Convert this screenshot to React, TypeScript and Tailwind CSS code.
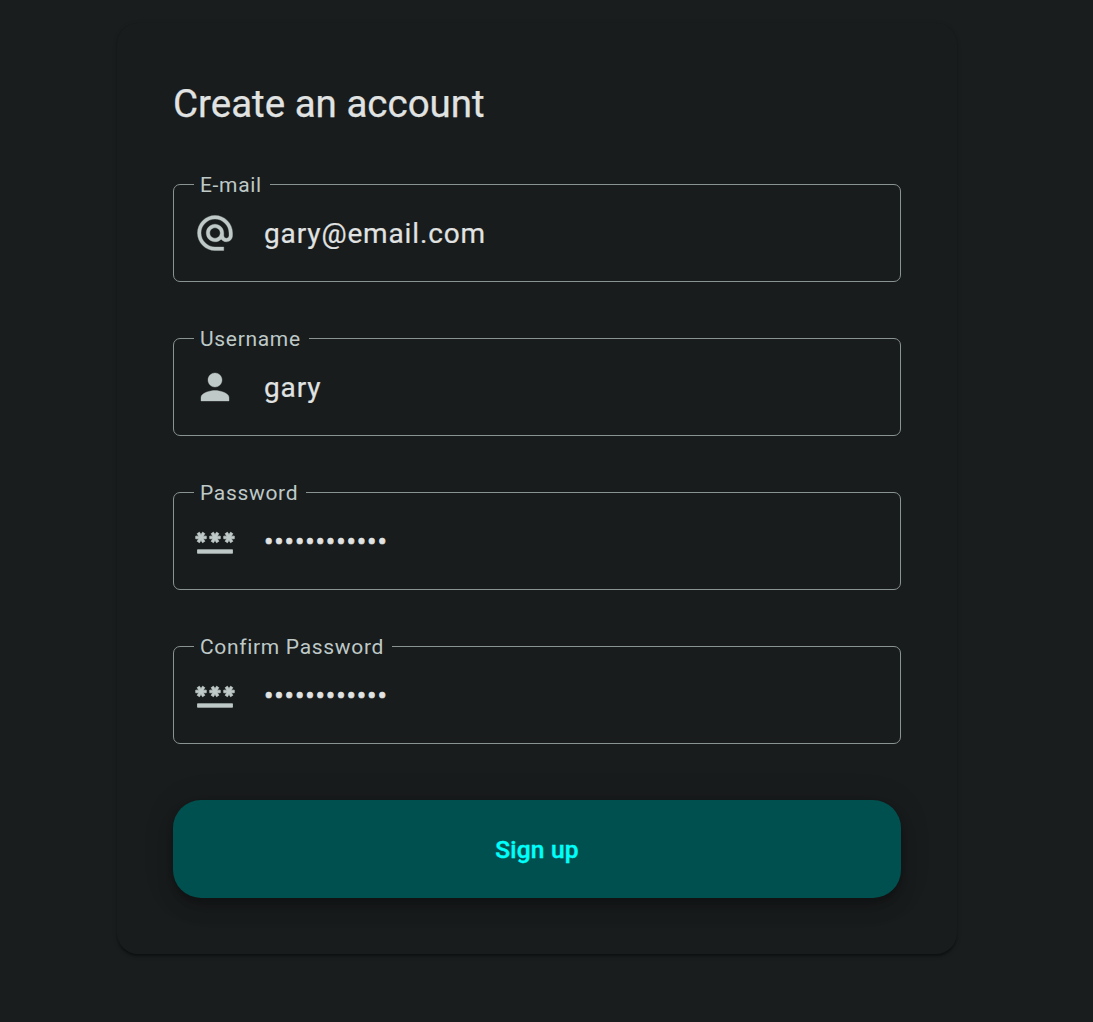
import type { IconType } from "react-icons";
import { MdAlternateEmail, MdPassword, MdPerson } from "react-icons/md";

type FieldProps = {
  label: string;
  type: string;
  value: string;
  Icon: IconType;
};

function Field({ label, type, value, Icon }: FieldProps) {
  const weight =
    type === "password"
      ? "[-webkit-text-stroke:0.6px_#e0e3e2]"
      : "[-webkit-text-stroke:0.2px_#e0e3e2]";
  const iconWeight = type === "password" ? "[stroke-width:0.45px]" : "[stroke-width:0.2px]";

  return (
    <fieldset className="flex h-[98px] w-full min-w-0 flex-col justify-center rounded-[7px] border border-[#899392] pl-5">
      <legend className="h-px pr-[8px] pl-[6px] text-[21px] leading-[2px] tracking-[0.68px] text-[#bec9c8]">
        {label}
      </legend>
      <div className="flex h-[96px] items-center">
        <Icon
          className={`size-[42px] shrink-0 stroke-[#bec9c8] text-[#bec9c8] [&_[fill=none]]:stroke-none ${iconWeight}`}
        />
        <input
          type={type}
          defaultValue={value}
          aria-label={label}
          className={`ml-[28px] h-[44px] min-w-0 flex-1 bg-transparent pt-px text-[28px] leading-[42px] tracking-[0.86px] text-[#e0e3e2] outline-none ${weight}`}
        />
      </div>
    </fieldset>
  );
}

const fields: FieldProps[] = [
  { label: "E-mail", type: "text", value: "gary@email.com", Icon: MdAlternateEmail },
  { label: "Username", type: "text", value: "gary", Icon: MdPerson },
  { label: "Password", type: "password", value: "password1234", Icon: MdPassword },
  { label: "Confirm Password", type: "password", value: "password1234", Icon: MdPassword },
];

export default function App() {
  return (
    <main className="h-[1022px] overflow-hidden bg-[#191d1d] pt-[23px] pl-[117px] font-[Roboto,sans-serif]">
      <form className="flex w-[840px] flex-col gap-14 rounded-[21px] bg-[#191c1d] p-14 shadow-[0_3.5px_1.75px_-1.75px_rgba(0,0,0,0.2),0_1.75px_1.75px_0_rgba(0,0,0,0.14),0_1.75px_5.25px_0_rgba(0,0,0,0.12)]">
        <h1 className="h-[49px] text-[38.5px] leading-[49px] text-[#e0e3e2] [-webkit-text-stroke:0.25px_#e0e3e2]">
          Create an account
        </h1>
        {fields.map((field) => (
          <Field key={field.label} {...field} />
        ))}
        <button
          type="button"
          className="h-[98px] rounded-[28px] bg-[#00504f] pt-[2px] text-[24.5px] font-medium tracking-[0.175px] text-[#00fffb] shadow-[0_5.25px_8.75px_-1.75px_rgba(0,0,0,0.2),0_10.5px_17.5px_0_rgba(0,0,0,0.14),0_1.75px_31.5px_0_rgba(0,0,0,0.12)] [-webkit-text-stroke:0.4px_#00fffb]"
        >
          Sign up
        </button>
      </form>
    </main>
  );
}
